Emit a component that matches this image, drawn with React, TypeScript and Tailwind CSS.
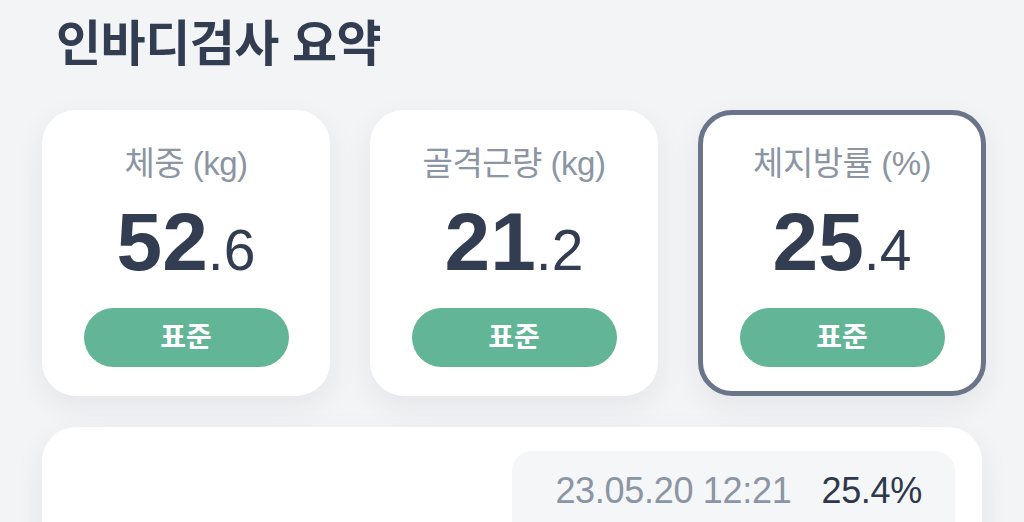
const FONT = "font-['Liberation_Sans','Noto_Sans_CJK_KR',sans-serif]";

interface Metric {
  label: string;
  whole: string;
  decimal: string;
  status: string;
  selected?: boolean;
}

const metrics: Metric[] = [
  { label: '체중 (kg)', whole: '52', decimal: '.6', status: '표준' },
  { label: '골격근량 (kg)', whole: '21', decimal: '.2', status: '표준' },
  { label: '체지방률 (%)', whole: '25', decimal: '.4', status: '표준', selected: true },
];

function MetricCard({ metric }: { metric: Metric }) {
  return (
    <div
      className={`w-[288px] h-[286px] rounded-[34px] bg-white border-[5px] flex flex-col items-center pt-[29px] shadow-[0_10px_30px_rgba(30,40,60,0.07)] ${
        metric.selected ? 'border-[#6b7589]' : 'border-white'
      }`}
    >
      <p className="text-[33px] leading-[40px] text-[#8b95a3] tracking-[-0.5px]">{metric.label}</p>
      <p className="mt-[18px] h-[80px] leading-[80px] text-[#333d52] whitespace-nowrap">
        <span className="text-[82px] leading-[80px] font-bold">{metric.whole}</span>
        <span className="text-[57px] leading-[80px]">{metric.decimal}</span>
      </p>
      <div className="mt-[26px] w-[205px] h-[59px] rounded-full bg-[#63b597] flex items-center justify-center">
        <span className="text-white text-[28px] font-bold">{metric.status}</span>
      </div>
    </div>
  );
}

export default function App() {
  return (
    <div className={`${FONT} w-[1024px] h-[522px] overflow-hidden bg-[#f3f4f6]`}>
      <div className="pl-[42px]">
        <h1 className="pl-[14px] pt-[12px] text-[49px] leading-[64px] font-bold text-[#333d52] tracking-[-0.5px]">
          인바디검사 요약
        </h1>

        <div className="mt-[34px] flex gap-[40px]">
          {metrics.map((m) => (
            <MetricCard key={m.label} metric={m} />
          ))}
        </div>

        <div className="mt-[31px] w-[940px] h-[140px] rounded-[34px] bg-white shadow-[0_10px_30px_rgba(30,40,60,0.07)] flex justify-end pt-[24px] pr-[27px]">
          <div className="w-[443px] h-[100px] rounded-[20px] bg-[#f5f6f8] flex items-start justify-end pr-[33px] pt-[17px] gap-[30px] text-[36px] leading-[46px] tracking-[-0.3px]">
            <span className="text-[#8b95a3]">23.05.20 12:21</span>
            <span className="text-[#2e374c]">25.4%</span>
          </div>
        </div>
      </div>
    </div>
  );
}
